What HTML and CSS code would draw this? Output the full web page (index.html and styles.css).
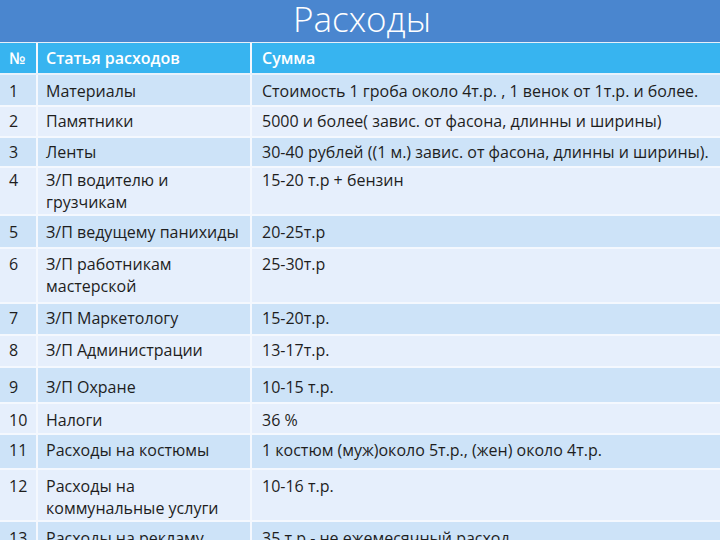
FILE: index.html
```html
<!DOCTYPE html>
<html lang="ru">
<head>
<meta charset="utf-8">
<link rel="stylesheet" href="styles.css">
</head>
<body>
<div class="slide">
  <h1 class="title">Расходы</h1>
  <table class="costs">
    <colgroup><col class="c1"><col class="c2"><col class="c3"></colgroup>
    <thead>
      <tr class="head"><th>№</th><th>Статья расходов</th><th>Сумма</th></tr>
    </thead>
    <tbody>
      <tr class="odd t5 b3"><td>1</td><td>Материалы</td><td>Стоимость 1 гроба около 4т.р. , 1 венок от 1т.р. и более.</td></tr>
      <tr class="even t3 b4"><td>2</td><td>Памятники</td><td>5000 и более( завис. от фасона, длинны и ширины)</td></tr>
      <tr class="odd t3 b3"><td>3</td><td>Ленты</td><td>30-40 рублей ((1 м.) завис. от фасона, длинны и ширины).</td></tr>
      <tr class="even t1 b1"><td>4</td><td>З/П водителю и грузчикам</td><td>15-20 т.р + бензин</td></tr>
      <tr class="odd t5 b4"><td>5</td><td>З/П ведущему панихиды</td><td>20-25т.р</td></tr>
      <tr class="even t4 b5"><td>6</td><td>З/П работникам мастерской</td><td>25-30т.р</td></tr>
      <tr class="odd t3 b5"><td>7</td><td>З/П Маркетологу</td><td>15-20т.р.</td></tr>
      <tr class="even t3 b5"><td>8</td><td>З/П Администрации</td><td>13-17т.р.</td></tr>
      <tr class="odd t8 b4"><td>9</td><td>З/П Охране</td><td>10-15 т.р.</td></tr>
      <tr class="even t5 b2"><td>10</td><td>Налоги</td><td>36 %</td></tr>
      <tr class="odd t4 b7"><td>11</td><td>Расходы на костюмы</td><td>1 костюм (муж)около 5т.р., (жен) около 4т.р.</td></tr>
      <tr class="even t5 b1"><td>12</td><td>Расходы на коммунальные услуги</td><td>10-16 т.р.</td></tr>
      <tr class="odd t5 b3"><td>13</td><td>Расходы на рекламу</td><td>35 т.р - не ежемесячный расход</td></tr>
    </tbody>
  </table>
</div>
</body>
</html>
```
FILE: styles.css
```css
html, body {
  margin: 0;
  padding: 0;
  background: #ffffff;
}
.slide {
  width: 720px;
  height: 540px;
  overflow: hidden;
  font-family: "Open Sans", "Noto Sans", sans-serif;
}
.title {
  margin: 0;
  height: 38px;
  padding: 0 0 4px 0;
  background: #4a86cf;
  color: #ffffff;
  font-family: "Open Sans", "Noto Sans", sans-serif;
  font-weight: 300;
  font-size: 35px;
  line-height: 38px;
  text-align: center;
  text-indent: 4px;
  border-bottom: 1px solid #e6effa;
}
.costs {
  width: 720px;
  border-collapse: collapse;
  table-layout: fixed;
  font-size: 16px;
  color: #1e1e1e;
}
.c1 { width: 37px; }
.c2 { width: 214px; }
.c3 { width: 469px; }
.costs th, .costs td {
  border: 2px solid #f4f8fe;
  border-top: none;
  padding: 4px 8px;
  text-align: left;
  vertical-align: top;
  line-height: 22px;
  font-weight: 400;
}
.costs th:first-child, .costs td:first-child { border-left: none; padding-left: 9px; padding-right: 2px; }
.costs th:last-child, .costs td:last-child { border-right: none; padding-left: 10px; }
.head th {
  background: #37b4f0;
  color: #ffffff;
  font-weight: 600;
  padding-top: 4px;
  padding-bottom: 4px;
  border-bottom: 2px solid #e8f2fc;
}
.odd td { background: #cde3f8; }
.even td { background: #e6effc; }
.t1 td { padding-top: 1px; }
.t3 td { padding-top: 3px; }
.t4 td { padding-top: 4px; }
.t5 td { padding-top: 5px; }
.t8 td { padding-top: 8px; }
.b1 td { padding-bottom: 1px; }
.b2 td { padding-bottom: 2px; }
.b3 td { padding-bottom: 3px; }
.b4 td { padding-bottom: 4px; }
.b5 td { padding-bottom: 5px; }
.b7 td { padding-bottom: 7px; }
```
